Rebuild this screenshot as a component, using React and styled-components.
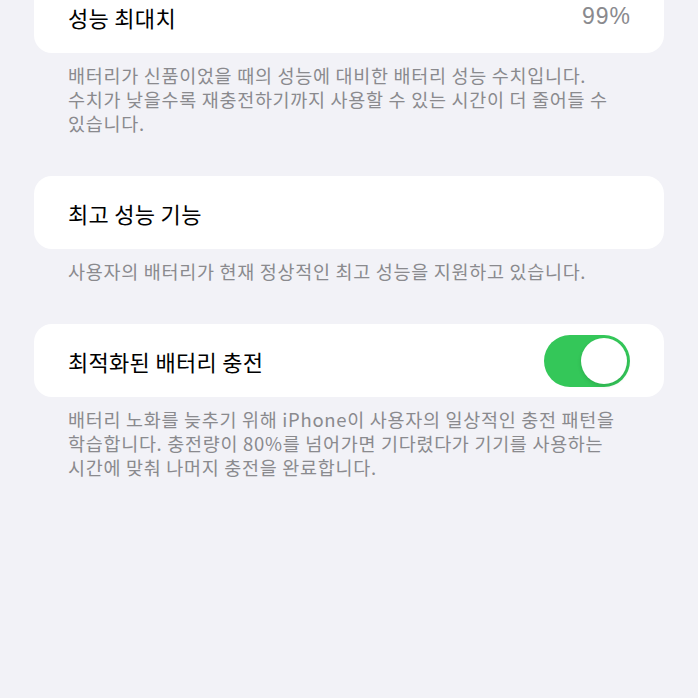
import React from 'react'
import styled, { createGlobalStyle } from 'styled-components'

const GlobalStyle = createGlobalStyle`
  html, body {
    margin: 0;
    padding: 0;
    background: #f2f2f7;
  }
  body {
    font-family: "Noto Sans CJK KR", "Noto Sans", sans-serif;
    -webkit-font-smoothing: antialiased;
  }
`

const Page = styled.div`
  width: 698px;
  height: 698px;
  overflow: hidden;
  background: #f2f2f7;
  padding: 0 34px;
  box-sizing: border-box;
`

const Section = styled.section`
  margin-top: ${(p) => (p.$first ? '-20px' : '41px')};
`

const Card = styled.div`
  background: #fff;
  border-radius: 18px;
  height: 73px;
  padding: 0 34px;
  display: flex;
  align-items: center;
  justify-content: space-between;
`

const Title = styled.span`
  font-size: 22px;
  color: #000;
  letter-spacing: 0.3px;
`

const Value = styled.span`
  font-family: "Liberation Sans", Arial, sans-serif;
  font-size: 23px;
  color: #8a8a8e;
  letter-spacing: 1px;
  margin-right: -1px;
`

const Footer = styled.p`
  margin: 0;
  padding: 10px 34px 0;
  font-size: 18.5px;
  line-height: 24px;
  color: #8a8a8e;
  letter-spacing: 0.7px;
  white-space: nowrap;
`

const Toggle = styled.div`
  width: 86px;
  height: 52px;
  border-radius: 26px;
  background: ${(p) => (p.$on ? '#34c759' : '#e9e9eb')};
  display: flex;
  align-items: center;
  justify-content: ${(p) => (p.$on ? 'flex-end' : 'flex-start')};
  padding: 3px;
  box-sizing: border-box;
`

const Knob = styled.div`
  width: 46px;
  height: 46px;
  border-radius: 50%;
  background: #fff;
  box-shadow: 0 2px 4px rgba(0, 0, 0, 0.12);
`

export default function App() {
  return (
    <Page>
      <GlobalStyle />
      <Section $first>
        <Card>
          <Title>성능 최대치</Title>
          <Value>99%</Value>
        </Card>
        <Footer>
          배터리가 신품이었을 때의 성능에 대비한 배터리 성능 수치입니다.
          <br />
          수치가 낮을수록 재충전하기까지 사용할 수 있는 시간이 더 줄어들 수
          <br />
          있습니다.
        </Footer>
      </Section>
      <Section>
        <Card>
          <Title>최고 성능 기능</Title>
        </Card>
        <Footer>사용자의 배터리가 현재 정상적인 최고 성능을 지원하고 있습니다.</Footer>
      </Section>
      <Section>
        <Card>
          <Title>최적화된 배터리 충전</Title>
          <Toggle $on>
            <Knob />
          </Toggle>
        </Card>
        <Footer>
          배터리 노화를 늦추기 위해 iPhone이 사용자의 일상적인 충전 패턴을
          <br />
          학습합니다. 충전량이 80%를 넘어가면 기다렸다가 기기를 사용하는
          <br />
          시간에 맞춰 나머지 충전을 완료합니다.
        </Footer>
      </Section>
    </Page>
  )
}
